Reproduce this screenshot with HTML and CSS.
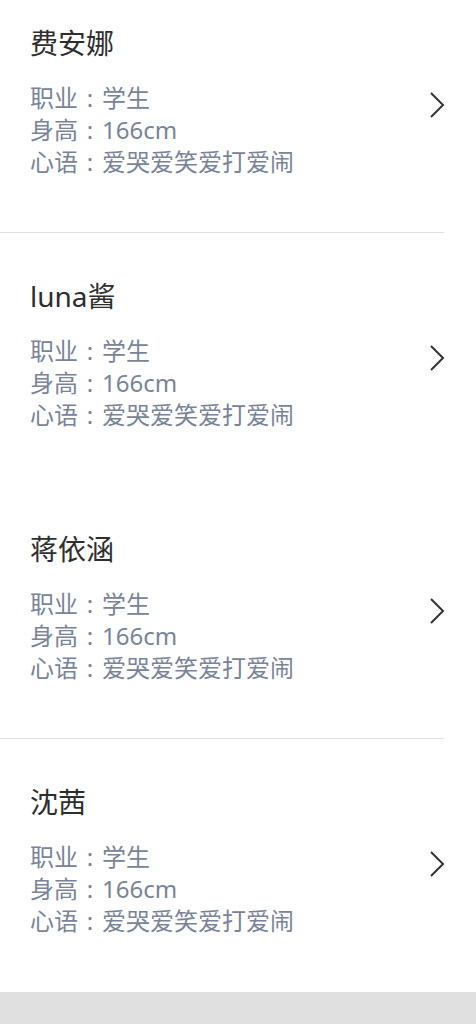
FILE: index.html
```html
<!DOCTYPE html>
<html lang="zh">
<head>
<meta charset="utf-8">
<link rel="stylesheet" href="styles.css">
</head>
<body>
<ul class="list">
  <li class="item item--line">
    <div class="info">
      <div class="name">费安娜</div>
      <div class="details">
        <p>职业<span class="colon">:</span>学生</p>
        <p>身高<span class="colon">:</span>166cm</p>
        <p>心语<span class="colon">:</span>爱哭爱笑爱打爱闹</p>
      </div>
    </div>
    <svg class="chevron" width="16" height="26" viewBox="0 0 16 26"><path d="M2 1 L14 13 L2 25" fill="none" stroke="#333" stroke-width="2"/></svg>
  </li>
  <li class="item">
    <div class="info">
      <div class="name">luna酱</div>
      <div class="details">
        <p>职业<span class="colon">:</span>学生</p>
        <p>身高<span class="colon">:</span>166cm</p>
        <p>心语<span class="colon">:</span>爱哭爱笑爱打爱闹</p>
      </div>
    </div>
    <svg class="chevron" width="16" height="26" viewBox="0 0 16 26"><path d="M2 1 L14 13 L2 25" fill="none" stroke="#333" stroke-width="2"/></svg>
  </li>
  <li class="item item--line">
    <div class="info">
      <div class="name">蒋依涵</div>
      <div class="details">
        <p>职业<span class="colon">:</span>学生</p>
        <p>身高<span class="colon">:</span>166cm</p>
        <p>心语<span class="colon">:</span>爱哭爱笑爱打爱闹</p>
      </div>
    </div>
    <svg class="chevron" width="16" height="26" viewBox="0 0 16 26"><path d="M2 1 L14 13 L2 25" fill="none" stroke="#333" stroke-width="2"/></svg>
  </li>
  <li class="item">
    <div class="info">
      <div class="name">沈茜</div>
      <div class="details">
        <p>职业<span class="colon">:</span>学生</p>
        <p>身高<span class="colon">:</span>166cm</p>
        <p>心语<span class="colon">:</span>爱哭爱笑爱打爱闹</p>
      </div>
    </div>
    <svg class="chevron" width="16" height="26" viewBox="0 0 16 26"><path d="M2 1 L14 13 L2 25" fill="none" stroke="#333" stroke-width="2"/></svg>
  </li>
</ul>
<div class="footer"></div>
</body>
</html>
```
FILE: styles.css
```css
* { box-sizing: border-box; }
html, body {
  margin: 0;
  padding: 0;
  background: #fff;
  font-family: "Noto Sans", "Noto Sans CJK SC", sans-serif;
}
body {
  display: flex;
  flex-direction: column;
  min-height: 1024px;
}
.list {
  list-style: none;
  margin: 0 32px 0 0;
  padding: 0;
}
.item {
  display: flex;
  align-items: flex-start;
  justify-content: space-between;
  height: 233px;
  margin-bottom: 20px;
  padding: 21px 0 0 30px;
  border-bottom: 1px solid transparent;
}
.item:last-child {
  margin-bottom: 0;
}
.item--line {
  border-bottom-color: #e0e0e0;
}
.info {
  display: flex;
  flex-direction: column;
}
.name {
  font-size: 28px;
  line-height: 44px;
  color: #2e2e2e;
}
.details {
  margin-top: 17px;
  font-size: 24px;
  line-height: 32px;
  color: #7a8499;
}
.details p {
  margin: 0;
}
.colon {
  display: inline-block;
  width: 24px;
  text-align: center;
}
.chevron {
  display: block;
  margin-top: 71px;
  margin-right: -1px;
}
.footer {
  margin-top: auto;
  height: 32px;
  background: #e0e0e0;
}
```
